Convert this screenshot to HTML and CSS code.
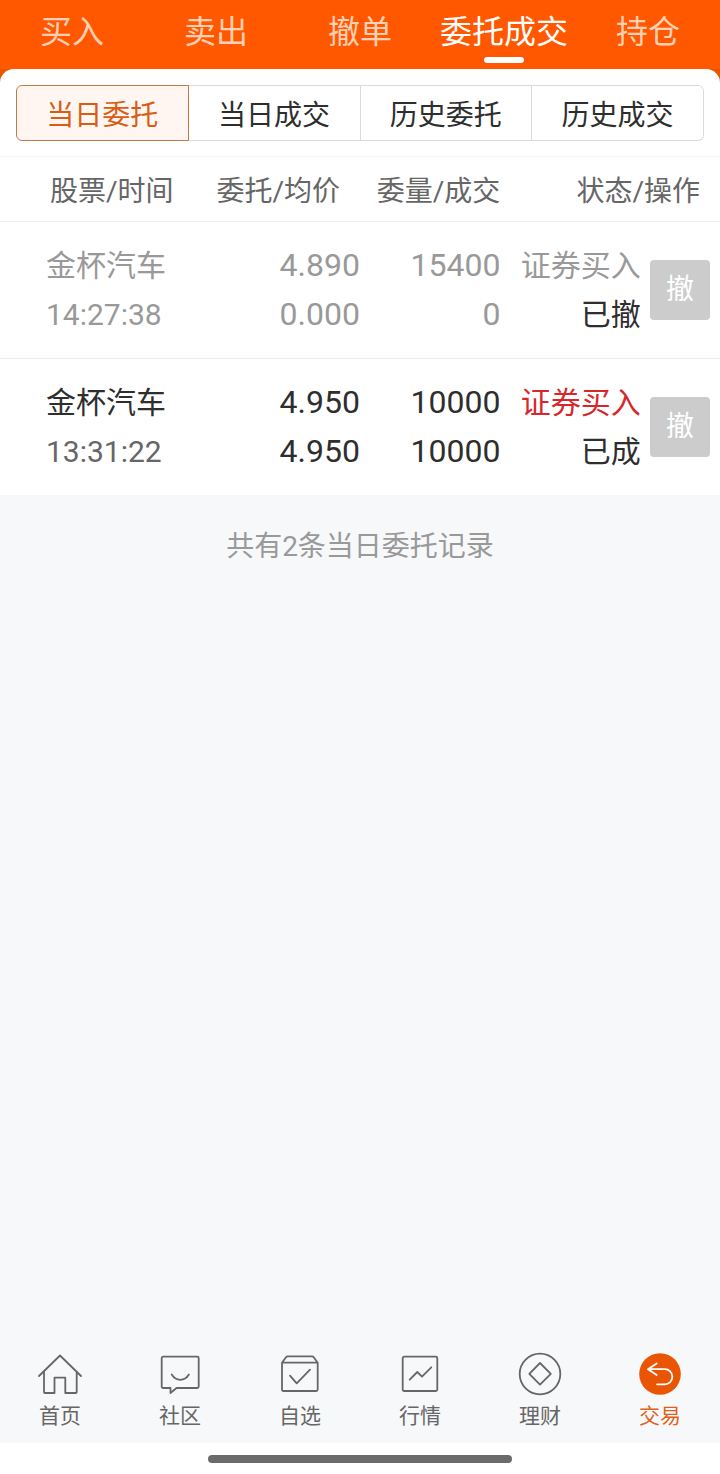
FILE: index.html
```html
<!DOCTYPE html>
<html lang="zh-CN">
<head>
<meta charset="utf-8">
<meta name="viewport" content="width=device-width, initial-scale=1">
<title>委托成交</title>
<link rel="stylesheet" href="styles.css">
</head>
<body>
<header class="topbar">
  <nav class="tabs">
    <a class="tab" href="#buy">买入</a>
    <a class="tab" href="#sell">卖出</a>
    <a class="tab" href="#cancel">撤单</a>
    <a class="tab tab-active" href="#orders" aria-current="page">委托成交</a>
    <a class="tab" href="#positions">持仓</a>
  </nav>
</header>

<main class="main">
  <div class="panel-wrap">
    <section class="panel">
      <div class="segments">
        <button class="segment segment-active" type="button">当日委托</button>
        <button class="segment" type="button">当日成交</button>
        <button class="segment" type="button">历史委托</button>
        <button class="segment" type="button">历史成交</button>
      </div>
      <table class="orders">
        <colgroup>
          <col class="col-stock"><col class="col-price"><col class="col-amount"><col class="col-state"><col class="col-action">
        </colgroup>
        <thead>
          <tr>
            <th class="head-stock">股票/时间</th>
            <th class="head-price">委托/均价</th>
            <th>委量/成交</th>
            <th class="head-state" colspan="2">状态/操作</th>
          </tr>
        </thead>
        <tbody>
          <tr class="order order-cancelled">
            <td class="stock"><div>金杯汽车</div><div class="time">14:27:38</div></td>
            <td class="number"><div>4.890</div><div>0.000</div></td>
            <td class="number"><div>15400</div><div>0</div></td>
            <td><div class="side">证券买入</div><div class="state">已撤</div></td>
            <td class="action"><button class="cancel" type="button">撤</button></td>
          </tr>
          <tr class="order">
            <td class="stock"><div>金杯汽车</div><div class="time">13:31:22</div></td>
            <td class="number"><div>4.950</div><div>4.950</div></td>
            <td class="number"><div>10000</div><div>10000</div></td>
            <td><div class="side">证券买入</div><div class="state">已成</div></td>
            <td class="action"><button class="cancel" type="button">撤</button></td>
          </tr>
        </tbody>
      </table>
    </section>
  </div>
  <p class="summary">共有2条当日委托记录</p>
</main>

<nav class="bottom-nav">
  <a class="nav-item" href="#home">
    <svg class="icon" viewBox="0 0 44 44" aria-hidden="true"><path d="M1 24 22 3.500 43 24M6 19.500V40q0 1 1 1h9.500V25.700h10.800V41h10.400q1 0 1-1V19.500"/></svg>
    <span>首页</span>
  </a>
  <a class="nav-item" href="#community">
    <svg class="icon" viewBox="0 0 44 44" aria-hidden="true"><path d="M5.200 4.700h34q1.500 0 1.500 1.500v28.300q0 1.500-1.500 1.500H18.500l-6 5v-5H5.200q-1.500 0-1.500-1.500V6.200q0-1.500 1.500-1.500ZM13.700 22.500q3.300 5.300 8.600 5.300t8.600-5.300"/></svg>
    <span>社区</span>
  </a>
  <a class="nav-item" href="#watchlist">
    <svg class="icon" viewBox="0 0 44 44" aria-hidden="true"><path d="M4 10.700 8 5.200q.6-.8 1.600-.8h24.500q1 0 1.600.8l4 5.500V37.500q0 1.500-1.500 1.500H5.500Q4 39 4 37.500ZM4 10.700h35.700M12 23.700l6.700 7.600L32 17.700"/></svg>
    <span>自选</span>
  </a>
  <a class="nav-item" href="#market">
    <svg class="icon" viewBox="0 0 44 44" aria-hidden="true"><rect x="4.700" y="4.700" width="34.600" height="34.300" rx="1.500"/><path d="m11.700 27.700 7.600-7.700 4.700 4.700 9.300-9.400"/></svg>
    <span>行情</span>
  </a>
  <a class="nav-item" href="#wealth">
    <svg class="icon" viewBox="0 0 44 44" aria-hidden="true"><circle cx="22" cy="22" r="20.300"/><path d="m22 11 10.800 10.800L22 32.600 11.300 21.800Z"/></svg>
    <span>理财</span>
  </a>
  <a class="nav-item nav-active" href="#trade" aria-current="page">
    <svg class="icon" viewBox="0 0 44 44" aria-hidden="true"><circle class="disc" cx="22" cy="22" r="20.800"/><path class="arrow" d="M18.700 11.500 10 17.200l8.700 5.800M10.500 17.200h16.300a7.500 7.500 0 0 1 0 15.100H19"/></svg>
    <span>交易</span>
  </a>
</nav>
<div class="gesture-area"><div class="gesture-bar"></div></div>
</body>
</html>
```

FILE: styles.css
```css
* {
  box-sizing: border-box;
}

body {
  margin: 0;
  min-height: 100vh;
  display: flex;
  flex-direction: column;
  background: #f7f8fa;
  color: #2e2e2e;
  font-family: Roboto, "Noto Sans CJK SC", sans-serif;
  font-size: 28px;
}

a {
  color: inherit;
  text-decoration: none;
}

button {
  margin: 0;
  padding: 0;
  border: 0;
  font: inherit;
}

.topbar {
  background: #ff5800;
}

.tabs {
  display: flex;
  height: 69px;
}

.tab {
  flex: 1;
  display: flex;
  flex-direction: column;
  align-items: center;
  padding-top: 9px;
  color: #ffd0b4;
  font-size: 32px;
  line-height: 46px;
  white-space: nowrap;
}

.tab-active {
  color: #fff;
}

.tab-active::after {
  content: "";
  width: 40px;
  height: 6px;
  margin-top: 2px;
  border-radius: 3px;
  background: #fff;
}

.main {
  flex: 1;
}

.panel-wrap {
  background: linear-gradient(#e95400 16px, #fff 16px);
}

.panel {
  border-radius: 14px 14px 0 0;
  background: #fff;
}

.segments {
  display: flex;
  padding: 16px 16px 15px;
  border-bottom: 1px solid #f5f5f5;
}

.segment {
  flex: 1;
  height: 56px;
  border: 1px solid #d8dadc;
  border-left-width: 0;
  background: #fff;
  color: #2e2e2e;
}

.segment:last-child {
  border-radius: 0 6px 6px 0;
}

.segment-active {
  border: 1px solid #c47843;
  border-radius: 6px 0 0 6px;
  background: #fff6f2;
  color: #d95c14;
}

.orders {
  width: 100%;
  table-layout: fixed;
  border-collapse: collapse;
  text-align: right;
}

.col-stock { width: 29%; }
.col-price { width: 21%; }
.col-amount { width: 19.500%; }
.col-state { width: 19.500%; }
.col-action { width: 11%; }

.orders th,
.orders td {
  padding: 0;
  font-weight: 400;
  white-space: nowrap;
}

.orders th {
  height: 64px;
  color: #666;
}

.orders .head-stock {
  padding-left: 50px;
  text-align: left;
}

.orders .head-price,
.orders .head-state {
  padding-right: 20px;
}

.orders thead tr,
.order-cancelled {
  border-bottom: 1px solid #ececec;
}

.orders td {
  height: 137px;
  font-size: 30px;
  line-height: 49px;
}

.orders .stock {
  padding-left: 46px;
  text-align: left;
}

.orders .number {
  font-size: 32px;
}

.time {
  color: #666;
}

.side {
  color: #d6282b;
}

.order-cancelled,
.order-cancelled .time,
.order-cancelled .side {
  color: #999;
}

.order-cancelled .state {
  color: #2e2e2e;
}

.orders .action {
  padding-right: 10px;
}

.cancel {
  display: block;
  width: 60px;
  height: 60px;
  margin-left: auto;
  border-radius: 4px;
  background: #ccc;
  color: #fff;
  font-size: 28px;
}

.summary {
  margin: 0;
  padding: 32px 0;
  color: #999;
  line-height: 40px;
  text-align: center;
}

.bottom-nav {
  display: flex;
  padding: 8px 0 11px;
  color: #666;
}

.nav-item {
  flex: 1;
  display: flex;
  flex-direction: column;
  align-items: center;
  gap: 4px;
  font-size: 21px;
  line-height: 32px;
}

.nav-active {
  color: #e06018;
}

.icon {
  width: 44px;
  height: 44px;
  fill: none;
  stroke: currentColor;
  stroke-width: 1.800;
  stroke-linejoin: round;
  stroke-linecap: round;
}

.disc {
  fill: #ea5504;
  stroke: none;
}

.arrow {
  stroke: #fff;
}

.gesture-area {
  display: flex;
  justify-content: center;
  padding: 12px 0 11px;
  background: #fff;
}

.gesture-bar {
  width: 304px;
  height: 8px;
  border-radius: 4px;
  background: #6b6b6b;
}
```
